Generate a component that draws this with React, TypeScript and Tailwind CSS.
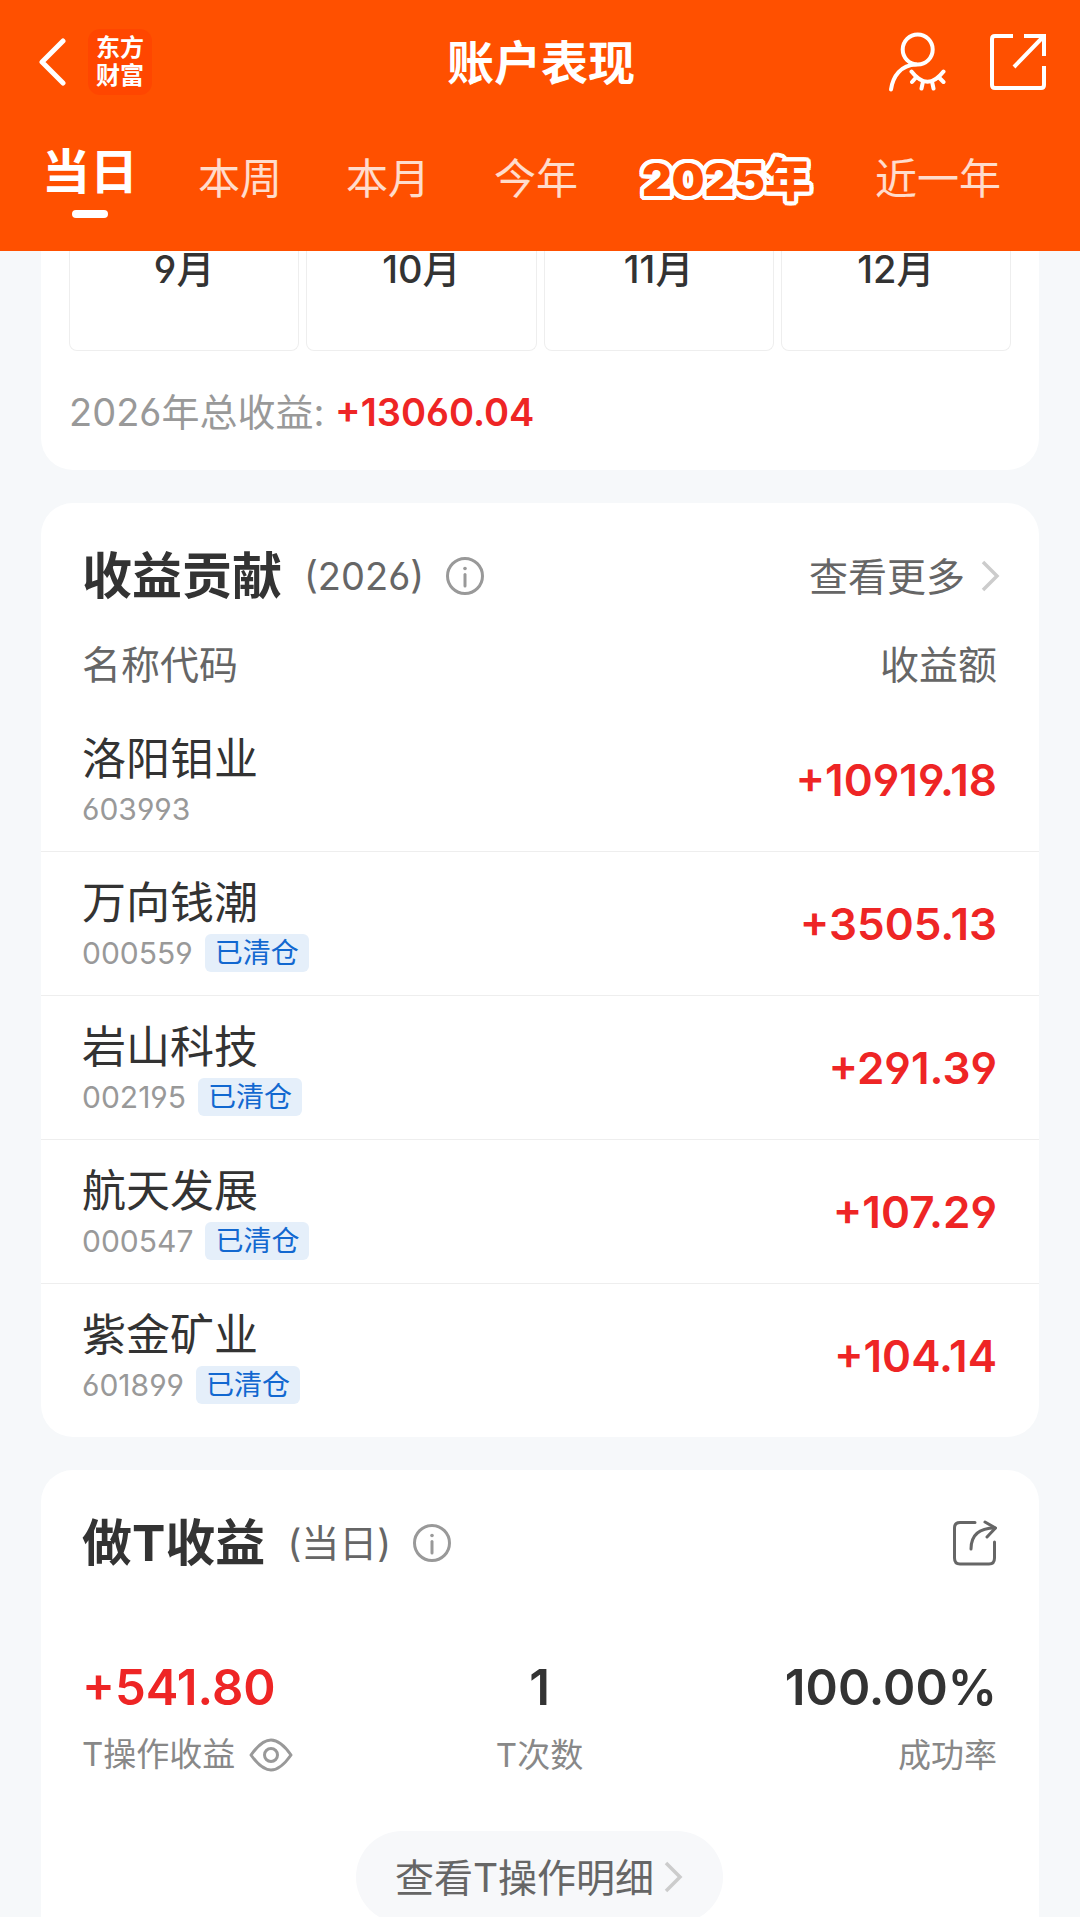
import { useState } from "react";
import clsx from "clsx";

const months = ["9月", "10月", "11月", "12月"];

const tabs = ["当日", "本周", "本月", "今年", "2025年", "近一年"];

const stocks = [
  { name: "洛阳钼业", code: "603993", amount: "+10919.18", cleared: false },
  { name: "万向钱潮", code: "000559", amount: "+3505.13", cleared: true },
  { name: "岩山科技", code: "002195", amount: "+291.39", cleared: true },
  { name: "航天发展", code: "000547", amount: "+107.29", cleared: true },
  { name: "紫金矿业", code: "601899", amount: "+104.14", cleared: true },
];

const ChevronRight = () => (
  <svg viewBox="0 0 20 32" className="h-8 w-5 shrink-0" fill="none" stroke="#cccccc" strokeWidth="3.5">
    <path d="M2 2 L16 16 L2 30" />
  </svg>
);

const InfoButton = ({ label }: { label: string }) => (
  <button type="button" aria-label={label} className="ml-[22px] shrink-0">
    <svg viewBox="0 0 38 38" className="size-[38px]" fill="none" stroke="#999999" strokeWidth="3" strokeLinecap="round">
      <circle cx="19" cy="19" r="17.5" />
      <path d="M19 17.5V29" />
      <circle cx="19" cy="11.5" r="1.8" fill="#999999" stroke="none" />
    </svg>
  </button>
);

const Header = () => {
  const [active, setActive] = useState("当日");

  return (
    <header className="h-[251px] shrink-0 bg-[#ff5000] text-white">
      <div className="grid h-[124px] grid-cols-[1fr_auto_1fr] items-center pr-[34px] pl-9">
        <div className="flex items-center gap-[22px]">
          <button type="button" aria-label="返回">
            <svg viewBox="0 0 30 50" className="h-[50px] w-[30px]" fill="none" stroke="white" strokeWidth="5" strokeLinecap="round" strokeLinejoin="round">
              <path d="M27 4 L6 25 L27 46" />
            </svg>
          </button>
          <div className="flex h-[66px] w-16 flex-col items-center justify-center rounded-xl bg-[#ff4600] text-2xl leading-7 font-bold">
            <span>东方</span>
            <span>财富</span>
          </div>
        </div>
        <h1 className="text-[47px] leading-none font-bold">账户表现</h1>
        <div className="flex items-center justify-end gap-11">
          <button type="button" aria-label="隐藏账户">
            <svg viewBox="0 0 58 60" className="h-[60px] w-[58px]" fill="none" stroke="white" strokeWidth="4" strokeLinecap="round">
              <circle cx="29.7" cy="17.5" r="15" />
              <path d="M3 57.5C5 44 13 33 28 32.5" />
              <path d="M23.5 39.5Q39.5 60 55.5 39.5" />
              <path d="M28 45.5L24 50M35 49.5L33.5 56.5M44 49.5L45.5 56.5M51 45.5L55.5 50" />
            </svg>
          </button>
          <button type="button" aria-label="分享">
            <svg viewBox="0 0 56 56" className="size-14" fill="none" stroke="white" strokeWidth="4">
              <path d="M23 2H5Q2 2 2 5V51Q2 54 5 54H51Q54 54 54 51V32" />
              <path d="M34 2H54V22M53 3L24 33" />
            </svg>
          </button>
        </div>
      </div>
      <nav className="flex h-[110px] items-center gap-16 pl-[42px] whitespace-nowrap">
        {tabs.map((tab) => (
          <button
            key={tab}
            type="button"
            onClick={() => setActive(tab)}
            className={clsx(
              "relative leading-none",
              tab === active && "-mr-1 pb-3.5 text-[48px] font-bold",
              tab !== active && tab !== "2025年" && "text-[42px] text-white/80",
              tab === "2025年" &&
                "text-[46px] font-black text-[#ff5000] [text-shadow:4px_0_white,-4px_0_white,0_4px_white,0_-4px_white,3px_3px_white,-3px_3px_white,3px_-3px_white,-3px_-3px_white,4px_2px_white,-4px_2px_white,4px_-2px_white,-4px_-2px_white,2px_4px_white,-2px_4px_white,2px_-4px_white,-2px_-4px_white]"
            )}
          >
            {tab}
            {tab === active && (
              <span className="absolute top-full left-1/2 h-2 w-9 -translate-x-1/2 rounded-full bg-white" />
            )}
          </button>
        ))}
      </nav>
    </header>
  );
};

const YearCard = () => (
  <section className="rounded-b-[32px] bg-white px-7 pb-[33px]">
    <div className="grid grid-cols-4 gap-[7px]">
      {months.map((month) => (
        <div key={month} className="h-[100px] rounded-b-lg border border-t-0 border-[#eeeeee] text-center text-[38px] leading-9 font-medium">
          {month}
        </div>
      ))}
    </div>
    <p className="mt-9 text-[38px] leading-[50px] text-[#999999]">
      2026年总收益: <span className="font-semibold text-[#ee2525]">+13060.04</span>
    </p>
  </section>
);

const ContributionCard = () => (
  <section className="rounded-[32px] bg-white pb-2.5">
    <div className="flex h-36 items-center pt-0.5 pr-[38px] pl-[41px]">
      <h2 className="text-[50px] leading-none font-bold">收益贡献</h2>
      <span className="ml-[22px] text-[38px] leading-none text-[#666666]">(2026)</span>
      <InfoButton label="收益贡献说明" />
      <a href="#more" className="ml-auto flex items-center gap-4 text-[39px] leading-none text-[#666666]">
        查看更多
        <ChevronRight />
      </a>
    </div>
    <table className="w-full">
      <thead>
        <tr className="h-15 text-[39px] leading-9 text-[#666666]">
          <th className="pb-6 pl-[41px] text-left font-normal">名称代码</th>
          <th className="pr-[42px] pb-6 text-right font-normal">收益额</th>
        </tr>
      </thead>
      <tbody>
        {stocks.map((stock) => (
          <tr key={stock.code} className="h-36 border-b border-[#eeeeee] last:border-b-0">
            <td className="pt-1 pl-[41px]">
              <div className="text-[44px] leading-[56px]">{stock.name}</div>
              <div className="flex h-11 items-center gap-3 text-[30px] leading-none text-[#999999]">
                {stock.code}
                {stock.cleared && (
                  <span className="flex h-[38px] items-center rounded-md bg-[#e5effa] px-2.5 text-[28px] text-[#1268d0]">
                    已清仓
                  </span>
                )}
              </div>
            </td>
            <td className="pt-0.5 pr-[42px] text-right text-[44px] font-semibold text-[#ee2525]">{stock.amount}</td>
          </tr>
        ))}
      </tbody>
    </table>
  </section>
);

const TradeCard = () => (
  <section className="rounded-t-[32px] bg-white pr-[42px] pl-[41px]">
    <div className="flex h-36 items-center pt-0.5">
      <h2 className="text-[50px] leading-none font-bold">做T收益</h2>
      <span className="ml-[22px] text-[38px] leading-none text-[#666666]">(当日)</span>
      <InfoButton label="做T收益说明" />
      <button type="button" aria-label="分享做T收益" className="ml-auto">
        <svg viewBox="0 0 44 46" className="h-[46px] w-11" fill="none" stroke="#666666" strokeWidth="3" strokeLinecap="round" strokeLinejoin="round">
          <path d="M22 2.5H7Q1.5 2.5 1.5 8V38Q1.5 44 7 44H36Q41.5 44 41.5 38V22" />
          <path d="M18 29C18 15 26 8 42 8" />
          <path d="M32 2L42.5 8L34 17" />
        </svg>
      </button>
    </div>
    <dl className="mt-9 grid grid-cols-3">
      <div className="flex flex-col-reverse">
        <dt className="flex h-15 items-center gap-3.5 text-[33px] text-[#888888]">
          T操作收益
          <button type="button" aria-label="隐藏收益">
            <svg viewBox="0 0 44 34" className="h-[34px] w-11" fill="none" stroke="#999999" strokeWidth="3" strokeLinejoin="round">
              <path d="M2 17C9 7 15 2 22 2S35 7 42 17C35 27 29 32 22 32S9 27 2 17Z" />
              <circle cx="22" cy="17" r="6.5" />
            </svg>
          </button>
        </dt>
        <dd className="text-[49px] leading-[75px] font-semibold text-[#ee2525]">+541.80</dd>
      </div>
      <div className="flex flex-col-reverse text-center">
        <dt className="h-15 text-[33px] leading-[60px] text-[#888888]">T次数</dt>
        <dd className="text-[49px] leading-[75px] font-semibold">1</dd>
      </div>
      <div className="flex flex-col-reverse text-right">
        <dt className="h-15 text-[33px] leading-[60px] text-[#888888]">成功率</dt>
        <dd className="text-[49px] leading-[75px] font-semibold">100.00%</dd>
      </div>
    </dl>
    <div className="mt-[46px] flex justify-center pb-10">
      <a href="#detail" className="flex h-[92px] items-center gap-2.5 rounded-full bg-[#f7f8fa] px-[39px] text-[39px] leading-none text-[#666666]">
        查看T操作明细
        <ChevronRight />
      </a>
    </div>
  </section>
);

const App = () => (
  <div className="flex h-screen flex-col overflow-hidden bg-[#f6f8fa] font-[Inter,'Noto_Sans_CJK_SC',sans-serif] text-[#333333] [font-feature-settings:'cv03','cv04']">
    <Header />
    <main className="min-h-0 flex-1 space-y-[33px] px-[41px]">
      <YearCard />
      <ContributionCard />
      <TradeCard />
    </main>
  </div>
);

export default App;
